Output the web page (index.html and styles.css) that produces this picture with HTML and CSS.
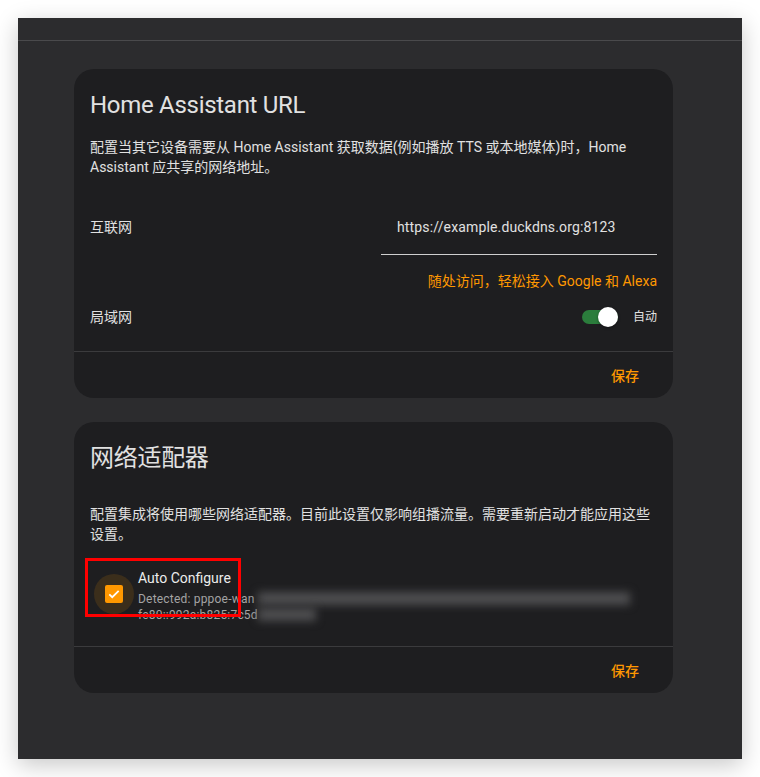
FILE: index.html
```html
<!DOCTYPE html>
<html lang="zh-CN">
<head>
    <meta charset="UTF-8">
    <meta name="viewport" content="width=device-width, initial-scale=1.0">
    <title>网络设置</title>
    <link rel="stylesheet" href="styles.css">
</head>
<body>
    <div class="window">
        <!-- 顶栏（只露出一点） -->
        <div class="topbar"></div>

        <div class="content">
            <!-- Home Assistant URL 卡片 -->
            <div class="card">
                <div class="card-header">Home Assistant URL</div>
                <div class="card-content">
                    <p class="desc">配置当其它设备需要从 Home Assistant 获取数据(例如播放 TTS 或本地媒体)时，Home Assistant 应共享的网络地址。</p>

                    <div class="row url-row">
                        <span class="label">互联网</span>
                        <div class="textfield">https://example.duckdns.org:8123</div>
                    </div>

                    <div class="link">随处访问，轻松接入 Google 和 Alexa</div>

                    <div class="row lan-row">
                        <span class="label">局域网</span>
                        <div class="formfield">
                            <div class="switch on">
                                <div class="track"></div>
                                <div class="thumb"></div>
                            </div>
                            <span class="switch-label">自动</span>
                        </div>
                    </div>
                </div>
                <div class="card-actions">
                    <button class="text-btn">保存</button>
                </div>
            </div>

            <!-- 网络适配器 卡片 -->
            <div class="card">
                <div class="card-header">网络适配器</div>
                <div class="card-content adapters">
                    <p class="desc">配置集成将使用哪些网络适配器。目前此设置仅影响组播流量。需要重新启动才能应用这些设置。</p>

                    <div class="check-row">
                        <div class="checkbox">
                            <div class="box">
                                <svg width="14" height="14" viewBox="0 0 24 24">
                                    <path d="M4 12.5l5 5L20 6.5" fill="none" stroke="#fff" stroke-width="3"/>
                                </svg>
                            </div>
                        </div>
                        <div class="check-text">
                            <div class="check-title">Auto Configure</div>
                            <div class="check-sub">Detected: pppoe-wan <span class="blur long"></span></div>
                            <div class="check-sub">fe80::992a:b825:7c5d<span class="blur short"></span></div>
                        </div>
                        <!-- 截图标注框 -->
                        <div class="highlight"></div>
                    </div>
                </div>
                <div class="card-actions">
                    <button class="text-btn">保存</button>
                </div>
            </div>
        </div>
    </div>
</body>
</html>
```

FILE: styles.css
```css
body {
    margin: 0;
    padding: 18px;
    background-color: #ffffff;
    font-family: Roboto, "Noto Sans CJK SC", sans-serif;
    color: #e1e1e1;
}
.window {
    width: 724px;
    height: 741px;
    background-color: #2c2c2e;
    box-shadow: 0 6px 22px rgba(0, 0, 0, 0.22);
    overflow: hidden;
}
.topbar {
    height: 22px;
    border-bottom: 1px solid #4a4a4c;
}
.content {
    padding: 28px 69px 0 56px;
}
/* 卡片 */
.card {
    background-color: #1e1e20;
    border-radius: 20px;
    margin-bottom: 24px;
}
.card-header {
    font-size: 24px;
    line-height: 32px;
    letter-spacing: -0.012em;
    padding: 20px 16px 0;
}
.card-content {
    padding: 16px 16px 14px;
    font-size: 14px;
    line-height: 20px;
}
.card-content.adapters {
    padding-top: 30px;
    padding-bottom: 23px;
}
.desc {
    margin: 0;
}
.row {
    display: flex;
    align-items: center;
    justify-content: space-between;
}
.url-row {
    margin-top: 22px;
}
.textfield {
    width: 276px;
    height: 56px;
    box-sizing: border-box;
    padding: 0 16px;
    display: flex;
    align-items: center;
    font-size: 14px;
    letter-spacing: 0.15px;
    border-bottom: 1px solid #cfcfcf;
}
.link {
    margin-top: 16px;
    text-align: right;
    color: #ff9800;
}
.lan-row {
    margin-top: 6px;
    height: 40px;
}
.formfield {
    display: flex;
    align-items: center;
}
/* 开关 */
.switch {
    position: relative;
    width: 36px;
    height: 20px;
    margin-right: 15px;
    display: flex;
    align-items: center;
}
.track {
    width: 36px;
    height: 14px;
    border-radius: 7px;
    background-color: #2b7d3c;
}
.thumb {
    position: absolute;
    right: 0;
    top: 0;
    width: 20px;
    height: 20px;
    border-radius: 50%;
    background-color: #ffffff;
    box-shadow: 0 1px 3px rgba(0, 0, 0, 0.4);
}
.switch-label {
    font-size: 12px;
}
.card-actions {
    border-top: 1px solid #3b3b3d;
    padding: 5px 16px;
    display: flex;
    justify-content: flex-end;
}
.text-btn {
    min-width: 64px;
    height: 36px;
    padding: 0 8px;
    background: none;
    border: none;
    color: #ff9800;
    font-family: Roboto, "Noto Sans CJK SC", sans-serif;
    font-size: 14px;
    font-weight: 500;
    cursor: pointer;
}
/* 复选框 */
.check-row {
    position: relative;
    display: flex;
    align-items: flex-start;
    margin-top: 24px;
}
.checkbox {
    width: 40px;
    height: 40px;
    margin: 6px 4px 0 4px;
    border-radius: 50%;
    background-color: rgba(255, 152, 0, 0.13);
    display: flex;
    align-items: center;
    justify-content: center;
}
.box {
    width: 18px;
    height: 18px;
    border-radius: 2px;
    background-color: #ff9800;
    display: flex;
    align-items: center;
    justify-content: center;
}
.check-title {
    font-size: 14px;
    line-height: 20px;
    margin-bottom: 3px;
    color: #ececec;
}
.check-sub {
    font-size: 12px;
    line-height: 16px;
    letter-spacing: 0.2px;
    color: #a4a4a4;
    white-space: nowrap;
}
.blur {
    display: inline-block;
    height: 13px;
    vertical-align: -2px;
    background-color: #4e4e50;
    filter: blur(4px);
}
.blur.long {
    width: 372px;
}
.blur.short {
    width: 58px;
}
.highlight {
    position: absolute;
    left: -5px;
    top: -10px;
    width: 156px;
    height: 59px;
    box-sizing: border-box;
    border: 3px solid #ff0000;
}
```
